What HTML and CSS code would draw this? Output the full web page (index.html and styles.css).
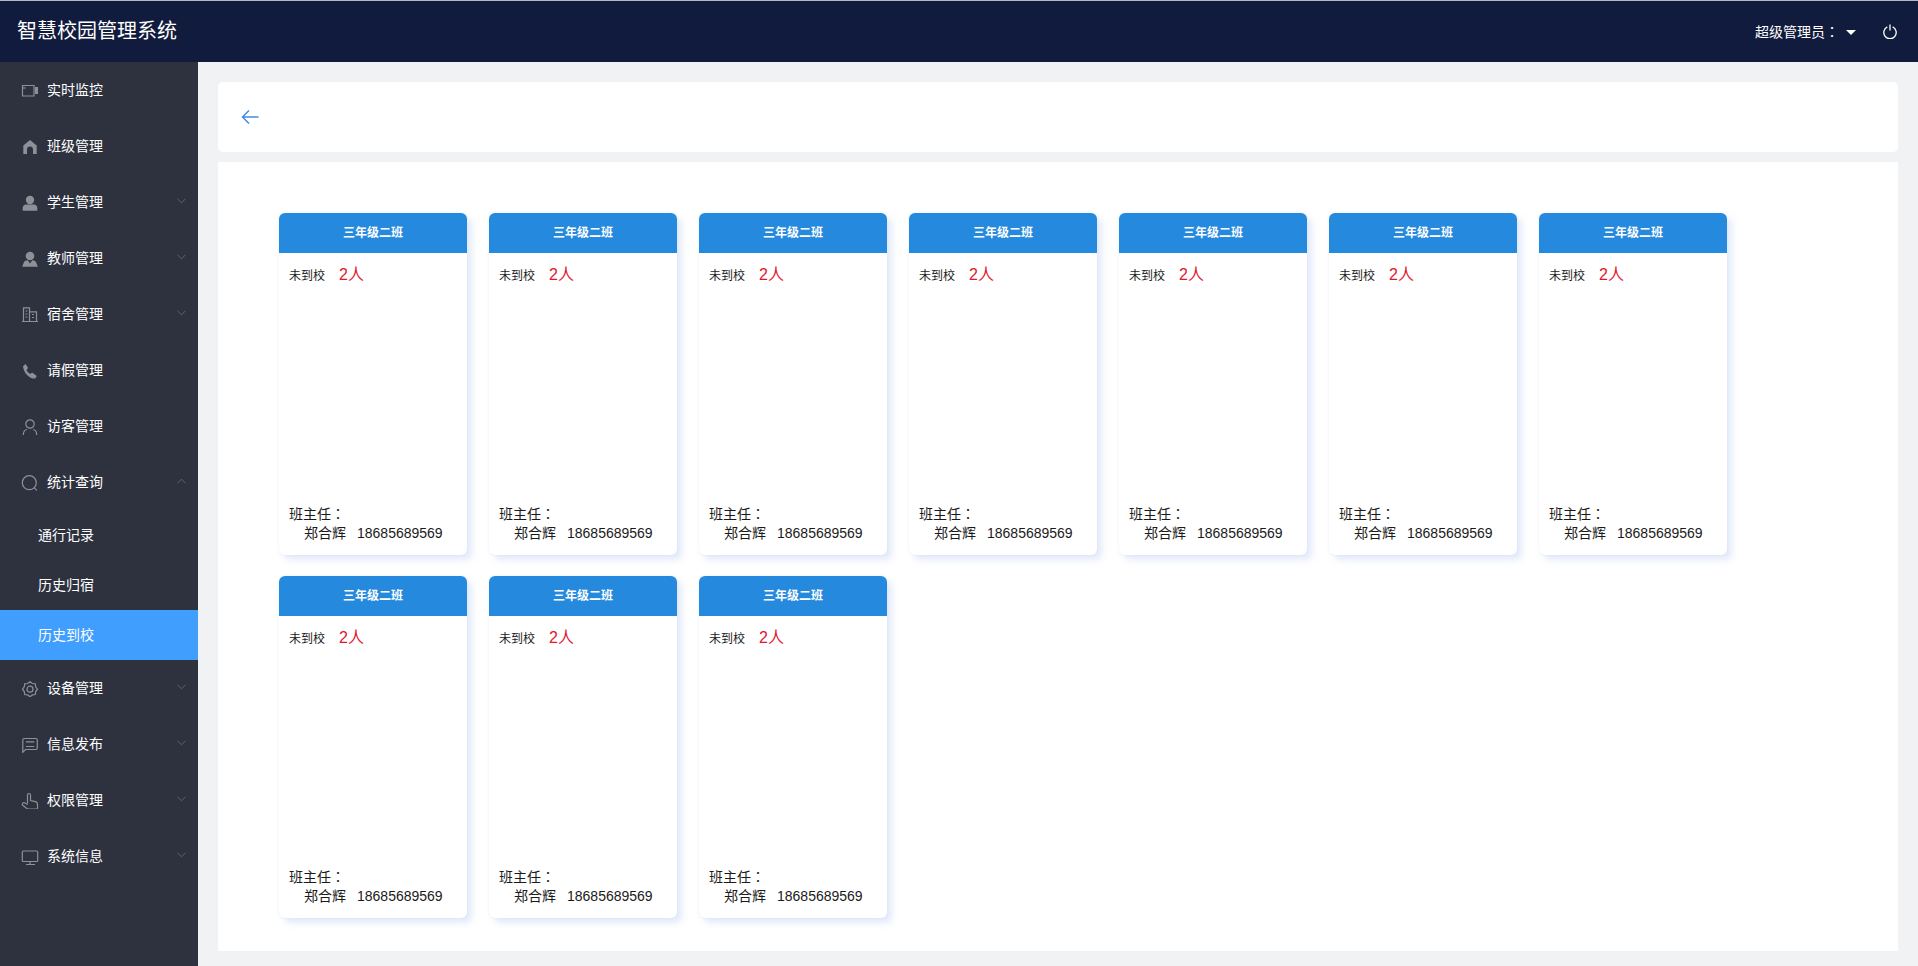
FILE: index.html
```html
<!DOCTYPE html>
<html lang="zh-CN">
<head>
<meta charset="utf-8">
<title>智慧校园管理系统</title>
<link rel="stylesheet" href="styles.css">
</head>
<body>
<header class="topbar">
  <div class="brand">智慧校园管理系统</div>
  <div class="user">
    <span class="user-name">超级管理员<span class="colon" lang="zh-TW">：</span></span>
    <span class="caret"></span>
    <svg class="power" viewBox="0 0 14 15"><path d="M4.300 2.900A6.200 6.200 0 1 0 9.700 2.900M7 .5v6"/></svg>
  </div>
</header>
<div class="shell">
  <nav class="sidebar">
    <a class="item"><svg class="ico" viewBox="0 0 18 18"><path d="M1.500 4.500h11.500v10.500h-11.500z"/><path class="solid" d="M14 6h3v7h-3z"/><path d="M1.500 7h3"/></svg><span>实时监控</span></a>
    <a class="item"><svg class="ico" viewBox="0 0 18 18"><path class="solid" d="M9 3l6.700 5.500V17H12v-4.500a3 3 0 0 0-6 0V17H2.300V8.500z"/></svg><span>班级管理</span></a>
    <a class="item"><svg class="ico" viewBox="0 0 18 18"><circle class="solid" cx="9" cy="7" r="4.200"/><path class="solid" d="M1.700 17.700v-2.900c0-2 1.600-3.300 3.300-3.300h8c1.700 0 3.300 1.300 3.300 3.300v2.900z"/></svg><span>学生管理</span><svg class="chev" viewBox="0 0 10 6"><path d="M.5.500 5 5 9.500.500"/></svg></a>
    <a class="item"><svg class="ico" viewBox="0 0 18 18"><circle class="solid" cx="9" cy="7" r="4.300"/><path class="solid" d="M1.200 17.700l1.600-4.200c.6-1.500 2.200-2.300 3.900-2.300L9 14.500l2.300-3.300c1.700 0 3.300.8 3.900 2.300l1.600 4.200z"/></svg><span>教师管理</span><svg class="chev" viewBox="0 0 10 6"><path d="M.5.500 5 5 9.500.500"/></svg></a>
    <a class="item"><svg class="ico" viewBox="0 0 18 18"><path d="M2.500 16.500V2.800h6v13.700M8.500 6.800h7v9.700M1 16.500h16M4.500 6h2M4.500 9h2M4.500 12h2M11 9.500h2M11 12.500h2"/></svg><span>宿舍管理</span><svg class="chev" viewBox="0 0 10 6"><path d="M.5.500 5 5 9.500.500"/></svg></a>
    <a class="item"><svg class="ico" viewBox="0 0 18 18"><path class="solid" d="M2 5.200 4.600 3l2.500 4-1.600 2c.6 1.500 2 3 3.600 3.900l2-1.300 4.700 3.400-1.600 2.600C8.500 17.900 2.800 12.500 2 5.200z"/></svg><span>请假管理</span></a>
    <a class="item"><svg class="ico" viewBox="0 0 18 18"><circle cx="9" cy="7" r="4.200"/><path d="M2.300 18c0-3.500 1.500-5 3.500-5.500M15.700 18c0-3.500-1.500-5-3.500-5.500"/></svg><span>访客管理</span></a>
    <a class="item"><svg class="ico" viewBox="0 0 18 18"><circle cx="8.300" cy="9.700" r="7"/><path d="M13.400 14.800l2.400 2.600"/></svg><span>统计查询</span><svg class="chev" viewBox="0 0 10 6"><path d="M.5 5.500 5 1l4.500 4.500"/></svg></a>
    <a class="sub">通行记录</a>
    <a class="sub">历史归宿</a>
    <a class="sub active">历史到校</a>
    <a class="item"><svg class="ico" viewBox="0 0 18 18"><path d="M9 2.700 11.370 4.470 14.300 4.900 14.730 7.830 16.500 10.200 14.730 12.570 14.300 15.500 11.370 15.930 9 17.700 6.630 15.930 3.700 15.500 3.270 12.570 1.500 10.200 3.270 7.830 3.700 4.900 6.630 4.470z"/><circle cx="9" cy="10.200" r="3"/></svg><span>设备管理</span><svg class="chev" viewBox="0 0 10 6"><path d="M.5.500 5 5 9.500.500"/></svg></a>
    <a class="item"><svg class="ico" viewBox="0 0 18 18"><path d="M1.800 17.300V5c0-.9.600-1.500 1.500-1.500h11.500c.9 0 1.500.6 1.500 1.500v8c0 .9-.6 1.500-1.500 1.500H4.500zM5 6.900h8.300M5 11.500h8.300"/></svg><span>信息发布</span><svg class="chev" viewBox="0 0 10 6"><path d="M.5.500 5 5 9.500.500"/></svg></a>
    <a class="item"><svg class="ico" viewBox="0 0 18 18"><path d="M6.500 12.500V4c0-2 3-2 3 0v5.500l5 1.200c1.500.4 2 1.300 2 2.300v5H6.500l-4.800-3.800c-1.200-1.500.7-3.300 2.300-2.200l2.500 1.500"/></svg><span>权限管理</span><svg class="chev" viewBox="0 0 10 6"><path d="M.5.500 5 5 9.500.500"/></svg></a>
    <a class="item"><svg class="ico" viewBox="0 0 18 18"><path d="M2.300 4h13.400c.6 0 1 .4 1 1v8.500c0 .6-.4 1-1 1H2.300c-.6 0-1-.4-1-1V5c0-.6.4-1 1-1zM9 14.500v3M5 17.500h9"/></svg><span>系统信息</span><svg class="chev" viewBox="0 0 10 6"><path d="M.5.500 5 5 9.500.500"/></svg></a>
  </nav>
  <main class="main">
    <section class="backbar">
      <svg class="back" viewBox="0 0 18 16"><path d="M17.500 8H1.500M8 1.500 1.500 8 8 14.500"/></svg>
    </section>
    <section class="panel">
      <article class="card"><h3 class="card-title">三年级二班</h3><div class="card-body"><p class="absent">未到校<b class="count">2人</b></p><div class="teacher"><p class="role">班主任<span class="colon" lang="zh-TW">：</span></p><p class="contact">郑合辉<span class="phone">18685689569</span></p></div></div></article>
      <article class="card"><h3 class="card-title">三年级二班</h3><div class="card-body"><p class="absent">未到校<b class="count">2人</b></p><div class="teacher"><p class="role">班主任<span class="colon" lang="zh-TW">：</span></p><p class="contact">郑合辉<span class="phone">18685689569</span></p></div></div></article>
      <article class="card"><h3 class="card-title">三年级二班</h3><div class="card-body"><p class="absent">未到校<b class="count">2人</b></p><div class="teacher"><p class="role">班主任<span class="colon" lang="zh-TW">：</span></p><p class="contact">郑合辉<span class="phone">18685689569</span></p></div></div></article>
      <article class="card"><h3 class="card-title">三年级二班</h3><div class="card-body"><p class="absent">未到校<b class="count">2人</b></p><div class="teacher"><p class="role">班主任<span class="colon" lang="zh-TW">：</span></p><p class="contact">郑合辉<span class="phone">18685689569</span></p></div></div></article>
      <article class="card"><h3 class="card-title">三年级二班</h3><div class="card-body"><p class="absent">未到校<b class="count">2人</b></p><div class="teacher"><p class="role">班主任<span class="colon" lang="zh-TW">：</span></p><p class="contact">郑合辉<span class="phone">18685689569</span></p></div></div></article>
      <article class="card"><h3 class="card-title">三年级二班</h3><div class="card-body"><p class="absent">未到校<b class="count">2人</b></p><div class="teacher"><p class="role">班主任<span class="colon" lang="zh-TW">：</span></p><p class="contact">郑合辉<span class="phone">18685689569</span></p></div></div></article>
      <article class="card"><h3 class="card-title">三年级二班</h3><div class="card-body"><p class="absent">未到校<b class="count">2人</b></p><div class="teacher"><p class="role">班主任<span class="colon" lang="zh-TW">：</span></p><p class="contact">郑合辉<span class="phone">18685689569</span></p></div></div></article>
      <article class="card"><h3 class="card-title">三年级二班</h3><div class="card-body"><p class="absent">未到校<b class="count">2人</b></p><div class="teacher"><p class="role">班主任<span class="colon" lang="zh-TW">：</span></p><p class="contact">郑合辉<span class="phone">18685689569</span></p></div></div></article>
      <article class="card"><h3 class="card-title">三年级二班</h3><div class="card-body"><p class="absent">未到校<b class="count">2人</b></p><div class="teacher"><p class="role">班主任<span class="colon" lang="zh-TW">：</span></p><p class="contact">郑合辉<span class="phone">18685689569</span></p></div></div></article>
      <article class="card"><h3 class="card-title">三年级二班</h3><div class="card-body"><p class="absent">未到校<b class="count">2人</b></p><div class="teacher"><p class="role">班主任<span class="colon" lang="zh-TW">：</span></p><p class="contact">郑合辉<span class="phone">18685689569</span></p></div></div></article>
    </section>
  </main>
</div>
</body>
</html>
```
FILE: styles.css
```css
* { box-sizing: border-box; }
html, body { height: 100%; }
body {
  margin: 0;
  height: 966px;
  overflow: hidden;
  display: flex;
  flex-direction: column;
  background: #f0f2f3;
  font-family: "Liberation Sans", "Noto Sans CJK SC", sans-serif;
  font-size: 14px;
  color: #1a1a1a;
}
p, h3 { margin: 0; }
.colon { font-family: "Noto Sans CJK TC", sans-serif; }

.topbar {
  height: 62px;
  flex: none;
  display: flex;
  align-items: center;
  justify-content: space-between;
  border-top: 1px solid #b5b8bd;
  background: #111b3d;
  color: #fff;
  padding: 0 21px 2px 17px;
}
.brand { font-size: 20px; line-height: 30px; }
.user { display: flex; align-items: center; }
.user-name { font-size: 14px; }
.caret {
  width: 0;
  height: 0;
  margin: 4px 0 0 7px;
  border-left: 5px solid transparent;
  border-right: 5px solid transparent;
  border-top: 5px solid #fff;
}
.power { width: 14px; height: 15px; margin: 1px 0 0 27px; fill: none; stroke: #fff; stroke-width: 1.3; }

.shell { flex: 1; display: flex; min-height: 0; }
.sidebar { width: 198px; flex: none; background: #2e323f; }
.item {
  height: 56px;
  display: flex;
  align-items: center;
  padding: 0 12px 0 21px;
  color: #fff;
  font-size: 14px;
}
.item span { margin: -2px 0 0 8px; }
.ico { width: 18px; height: 18px; flex: none; fill: none; stroke: #8d9098; stroke-width: 1.2; }
.ico .solid { fill: #8d9098; stroke: none; }
.chev { width: 9px; height: 6px; margin: -2px 0 0 auto; fill: none; stroke: #666a75; stroke-width: 1; }
.sub {
  height: 50px;
  display: flex;
  align-items: center;
  padding: 0 0 2px 38px;
  color: #fff;
  font-size: 14px;
}
.sub.active { background: #409eff; }

.main { flex: 1; min-width: 0; padding: 20px 20px 15px; display: flex; flex-direction: column; gap: 10px; }
.backbar {
  height: 70px;
  flex: none;
  display: flex;
  align-items: center;
  padding-left: 23px;
  background: #fff;
  border-radius: 5px;
}
.back { width: 18px; height: 16px; fill: none; stroke: #4589ea; stroke-width: 1.5; }
.panel {
  flex: 1;
  background: #fff;
  padding: 51px 0 0 61px;
  display: flex;
  flex-wrap: wrap;
  align-content: flex-start;
  gap: 21px 22px;
}
.card {
  width: 188px;
  height: 342px;
  display: flex;
  flex-direction: column;
  background: #fff;
  border-radius: 6px;
  box-shadow: 5px 5px 6px rgba(200, 215, 245, .5), 0 0 2px rgba(205, 212, 230, .5);
}
.card-title {
  height: 40px;
  flex: none;
  display: flex;
  align-items: center;
  justify-content: center;
  padding-bottom: 3px;
  background: #2589de;
  border-radius: 6px 6px 0 0;
  color: #fff;
  font-size: 12px;
  font-weight: 700;
}
.card-body {
  flex: 1;
  display: flex;
  flex-direction: column;
  justify-content: space-between;
  padding: 11px 10px 13px;
}
.absent { display: flex; align-items: center; font-size: 12px; line-height: 24px; }
.count { margin: -2px 0 0 14px; font-size: 16px; font-weight: 400; color: #e2162c; }
.teacher { font-size: 14px; line-height: 18px; }
.role { margin-bottom: 1px; }
.contact { padding-left: 15px; }
.phone { margin-left: 11px; }
```
